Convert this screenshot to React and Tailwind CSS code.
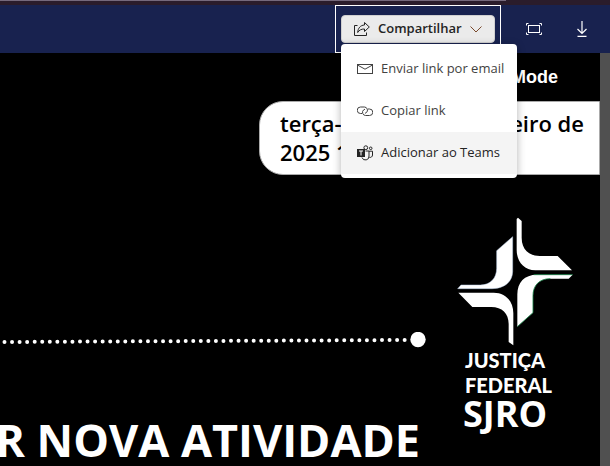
import React from "react";

function ShareIcon() {
  return (
    <svg className="h-4 w-4" viewBox="0 0 16 16" fill="none" stroke="currentColor" strokeWidth="1">
      <path d="M3.5 4.5H0.5V14.5H12.5V11.5" />
      <path d="M10.5 1.5L15.3 6L10.5 10.5V8C7.2 8 5.2 9 3.7 11.5C4 7 6.5 4.2 10.5 4Z" strokeLinejoin="round" />
    </svg>
  );
}

function ChevronIcon() {
  return (
    <svg className="h-3 w-3" viewBox="0 0 12 12" fill="none" stroke="#7a4a2c" strokeWidth="1">
      <path d="M0.5 3.5L6 9L11.5 3.5" />
    </svg>
  );
}

function FitIcon() {
  return (
    <svg className="h-4 w-4" viewBox="0 0 16 16" fill="none" stroke="#fff" strokeWidth="1">
      <rect x="2.5" y="4.5" width="11" height="7" />
      <path d="M0.5 4.5V2.5H2.5M13.5 2.5H15.5V4.5M15.5 11.5V13.5H13.5M2.5 13.5H0.5V11.5" />
    </svg>
  );
}

function DownloadIcon() {
  return (
    <svg className="h-4 w-4" viewBox="0 0 16 16" fill="none" stroke="#fff" strokeWidth="1.2">
      <path d="M8 0V12.5M3.5 8L8 12.5L12.5 8M3.5 15.4H12.5" />
    </svg>
  );
}

function MailIcon() {
  return (
    <svg className="h-4 w-4" viewBox="0 0 16 16" fill="none" stroke="currentColor" strokeWidth="1">
      <rect x="0.5" y="3.5" width="15" height="9" />
      <path d="M0.8 4.2L8 8.2L15.2 4.2" />
    </svg>
  );
}

function LinkIcon() {
  return (
    <svg className="h-4 w-4" viewBox="0 0 16 16" fill="none" stroke="currentColor" strokeWidth="1">
      <path d="M5 10.5H3.5A3 3 0 0 1 3.5 4H7.5A3.2 3.2 0 0 1 9.5 9.5L8 10.3" />
      <path d="M11 6H12.5A3 3 0 0 1 12.5 12.5H8.5A3.2 3.2 0 0 1 6.5 7L8 6.2" />
    </svg>
  );
}

function TeamsIcon() {
  return (
    <svg className="h-4 w-4" viewBox="0 0 16 16" fill="none" stroke="currentColor" strokeWidth="1">
      <circle cx="8.8" cy="2.7" r="1.9" />
      <circle cx="13.7" cy="3.3" r="1.3" />
      <path d="M8.5 6H12V11A3.6 3.6 0 0 1 5 12.5M12 6.2H15.5V10A2.4 2.4 0 0 1 12.3 12.3" />
      <rect x="0" y="4" width="8" height="8" fill="currentColor" stroke="none" />
      <path d="M2 6H6M4 6V10.5" stroke="#fff" />
    </svg>
  );
}

function CourtLogo() {
  return (
    <svg className="h-[129px] w-[116px]" viewBox="50 36 348 387" fill="#fff" role="img" aria-label="Justiça Federal">
      <path d="M229 42L233 38L244 48V98C244 133 266 153 298 153H352L395 196H285C250 196 229 168 229 135Z" />
      <path d="M217 95V200C216 232 190 251 155 251H52L62 240H120C150 240 169 220 169 190V137Z" stroke="#b9cce8" strokeWidth="1.5" />
      <path d="M54 263H160C197 263 219 290 219 325V421L205 411V357C205 325 185 306 153 306H96Z" />
      <path d="M397 209H290C252 209 231 232 231 268V365L278 323V272C278 242 296 221 330 221H385Z" />
      <path d="M231 365L278 323V272C278 242 296 221 330 221M397 209H280" fill="none" stroke="#168044" strokeWidth="2.5" />
    </svg>
  );
}

const menuItems = [
  { label: "Enviar link por email", icon: MailIcon, tone: "text-[#424242]" },
  { label: "Copiar link", icon: LinkIcon, tone: "text-[#424242]" },
  { label: "Adicionar ao Teams", icon: TeamsIcon, tone: "bg-[#f4f4f4] text-[#242424]" },
];

function ShareMenu() {
  return (
    <div role="menu" className="absolute top-[38px] left-[5px] z-10 w-44 rounded bg-white py-1 shadow-[0_2px_8px_rgba(0,0,0,0.3)]">
      {menuItems.map(({ label, icon: Icon, tone }) => (
        <button key={label} role="menuitem" className={`flex h-[42px] w-full items-center gap-2 pl-4 text-[13px] whitespace-nowrap ${tone}`}>
          <Icon />
          {label}
        </button>
      ))}
    </div>
  );
}

function Header() {
  return (
    <header className="flex h-12 shrink-0 justify-end bg-[#18224f]">
      <div className="relative border border-white px-[5px] py-[9px]">
        <button aria-haspopup="menu" aria-expanded="true" className="flex h-7 w-[154px] items-center rounded-sm border border-[#d0d0d0] bg-[#ebebeb] pl-3 text-[#242424]">
          <ShareIcon />
          <span className="ml-2 w-[92px] text-left text-[13px] font-semibold">Compartilhar</span>
          <ChevronIcon />
        </button>
        <ShareMenu />
      </div>
      <div className="flex items-center gap-8 pr-5 pl-[25px]">
        <button aria-label="Ajustar à tela"><FitIcon /></button>
        <button aria-label="Baixar"><DownloadIcon /></button>
      </div>
    </header>
  );
}

function Timeline() {
  return (
    <svg className="h-4 w-[426px]" viewBox="0 0 426 16" fill="#fff">
      <line x1="4.5" y1="10" x2="406" y2="8" stroke="#fff" strokeWidth="4" strokeLinecap="round" strokeDasharray="0 7.55" />
      <circle cx="418" cy="7.5" r="7.7" />
    </svg>
  );
}

function Slide() {
  return (
    <main className="flex min-w-0 flex-1 flex-col bg-black text-white">
      <div className="flex h-12 shrink-0 items-center justify-end pr-[42px] font-['Liberation_Sans',sans-serif] text-lg font-bold">Mode</div>
      <div className="w-[341px] shrink-0 self-end rounded-l-3xl border border-[#aaa] bg-white py-[7px] pr-[15px] pl-5 text-[22px] leading-[29px] font-semibold text-black">
        <div className="flex justify-between">
          <span>terça-</span>
          <span>eiro de</span>
        </div>
        <div>2025 1</div>
      </div>
      <div className="flex shrink-0 justify-between pt-[42px] pr-[27px]">
        <div className="flex w-[426px] flex-col items-end pt-[115px]">
          <Timeline />
          <h1 className="mt-[60px] pr-[6px] text-[45px] leading-[64px] font-bold whitespace-nowrap">R NOVA ATIVIDADE</h1>
        </div>
        <div className="flex flex-col">
          <CourtLogo />
          <div className="mt-[2px] pl-2 font-['Lato',sans-serif] text-[20px] leading-[25px] font-black">
            <p>JUSTIÇA</p>
            <p>FEDERAL</p>
          </div>
          <p className="pl-[6px] text-[36px] leading-8 font-bold">SJRO</p>
        </div>
      </div>
    </main>
  );
}

export default function App() {
  return (
    <div className="flex h-screen flex-col overflow-hidden bg-black font-['Open_Sans','Noto_Sans',sans-serif]">
      <div className="h-[5px] shrink-0 bg-[#2a1c2b]">
        <div className="h-px w-[83%] bg-[#75697c]" />
      </div>
      <Header />
      <div className="flex min-h-0 flex-1">
        <Slide />
        <div className="w-[10px] bg-[#505050]" />
      </div>
    </div>
  );
}
